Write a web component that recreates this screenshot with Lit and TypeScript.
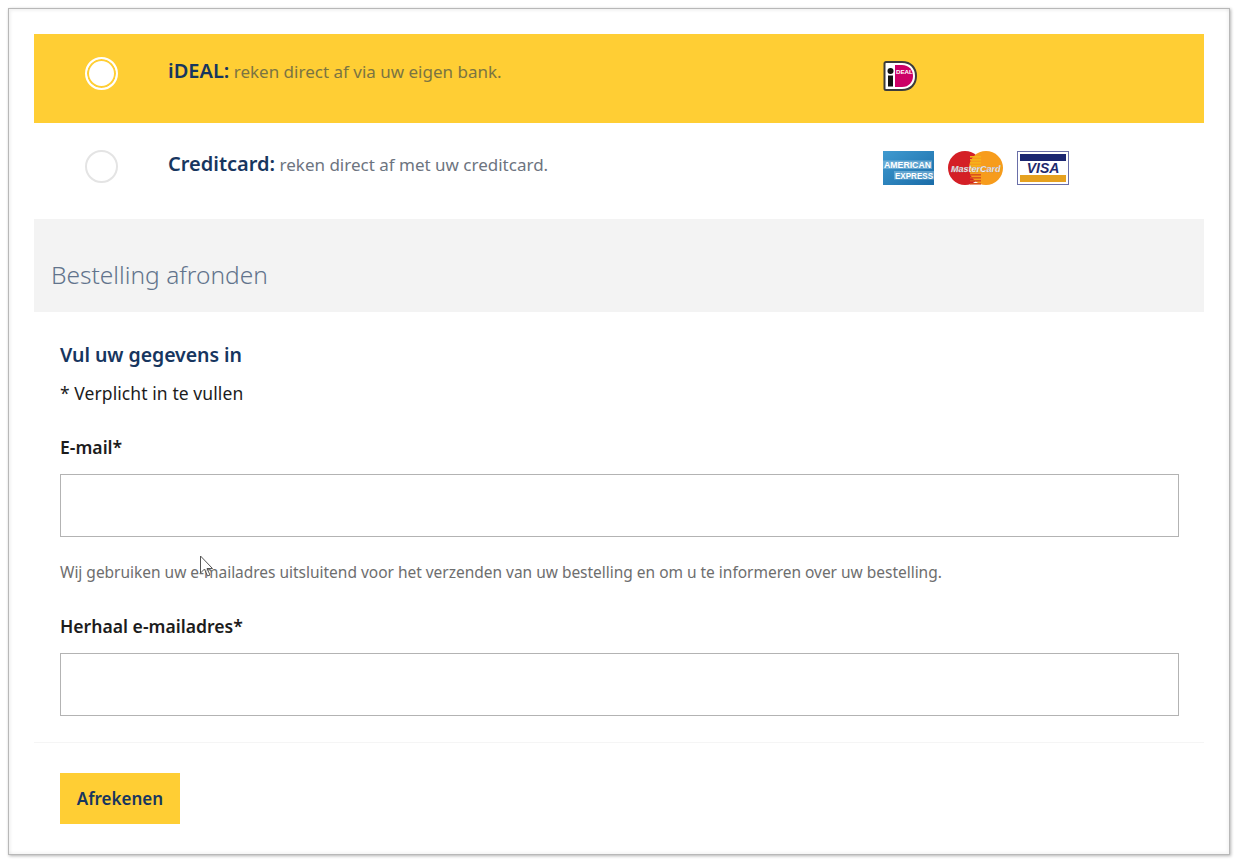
import { LitElement, html, css, svg } from "lit";
import { customElement } from "lit/decorators.js";

@customElement("app-root")
export class AppRoot extends LitElement {
  static styles = css`
    :host { display: block; width: 1238px; height: 864px; background: #fff; font-family: "Noto Sans", "Open Sans", sans-serif; overflow: hidden; }
    * { box-sizing: border-box; }
    .frame { margin: 9px 0 0 9px; width: 1220px; height: 845px; background: #fff; padding: 25px 25px 0 25px;
      box-shadow: 0 0 0 1px #b8b8b8, 1px 1px 3px 1px rgba(0,0,0,.3), inset 2px 2px 3px rgba(0,0,0,.05), inset -2px -2px 3px rgba(0,0,0,.04); }
    .pay { display: grid; grid-template-columns: 51px 33px 50px 715px auto; }
    .pay.on { height: 89px; background: #ffce34; padding-top: 23px; }
    .pay.off { height: 96px; padding-top: 27px; }
    .radio { grid-column: 2; width: 33px; height: 33px; border-radius: 50%; border: 2px solid #e4e4e4; background: #fff; }
    .on .radio { border: 2px solid #fff; background: #fff; box-shadow: inset 0 0 0 2px #ffce34; }
    .label { grid-column: 4; font-size: 17px; line-height: 28px; color: #6d7480; white-space: nowrap; }
    .on .label { color: #7b7442; line-height: 30px; margin-top: -1px; }
    .label b { font-size: 20px; font-weight: 600; color: #17365f; }
    .logos { grid-column: 5; display: flex; gap: 14px; align-items: center; height: 34px; }
    .off .logos { margin-top: 1px; height: 34px; }
    .on .logos { margin-top: 2px; }
    .head { height: 93px; background: #f3f3f3; padding: 38px 0 0 17px; font-size: 24.5px; line-height: 36px; font-weight: 300; color: #62738c; }
    .body { padding: 28px 25px 0 26px; }
    h2 { margin: 0; font-size: 19.5px; line-height: 30px; font-weight: 600; color: #17365f; letter-spacing: -.05px; }
    .req { margin: 12px 0 0; font-size: 17.5px; line-height: 22px; color: #1c1c1c; letter-spacing: .08px; }
    label { display: block; font-size: 17.6px; line-height: 24px; font-weight: 600; color: #1c1c1c; }
    .l1 { margin-top: 31px; }
    .l2 { margin-top: 31px; }
    .input { display: block; width: 100%; height: 63px; margin-top: 15px; border: 1px solid #b3b3b3; background: #fff; padding: 0; }
    .hint { margin: 24px 0 0; position: relative; font-size: 15.5px; line-height: 22px; color: #6e6e6e; letter-spacing: -.02px; white-space: nowrap; }
    .cursor { position: absolute; left: 139px; top: -6px; }
    .rule { height: 1px; background: #f5f5f5; margin-top: 26px; }
    .foot { padding: 30px 26px 0; }
    button { display: block; width: 120px; height: 51px; border: 0; background: #ffce34; color: #17365f; font: 600 17px/51px "Noto Sans", sans-serif; padding: 0; }
  `;

  private ideal() {
    return html`<svg width="34" height="30" viewBox="0 0 34 30">
      <path d="M1.500 2.500a1.500 1.500 0 0 1 1.500-1.500h16c9 0 14 6 14 14s-5 14-14 14H3a1.500 1.500 0 0 1-1.500-1.500z" fill="#fff" stroke="#3c3c3c" stroke-width="2"/>
      <path d="M12 4h7c7 0 11 5 11 11s-4 11-11 11h-7z" fill="#cc0066"/>
      <circle cx="7.500" cy="10" r="3" fill="#111"/>
      <rect x="5" y="14.500" width="5" height="11" fill="#111"/>
      <text x="13" y="13" font-family="Liberation Sans" font-weight="700" font-size="6.200" fill="#fff">DEAL</text>
    </svg>`;
  }

  private amex() {
    return html`<svg width="51" height="34" viewBox="0 0 51 34">
      <defs><linearGradient id="ax" x1="0" y1="0" x2="1" y2="1"><stop offset="0" stop-color="#3f9ad0"/><stop offset="1" stop-color="#1a6ca8"/></linearGradient></defs>
      <rect width="51" height="34" fill="url(#ax)"/>
      <rect x="0" y="9.500" width="49" height="8.500" fill="#8fc3e2" opacity=".55"/>
      <rect x="11" y="20" width="40" height="8.500" fill="#8fc3e2" opacity=".55"/>
      <text x="1" y="17" font-family="Liberation Sans" font-weight="700" font-size="8.200" fill="#fff" textLength="47" lengthAdjust="spacingAndGlyphs">AMERICAN</text>
      <text x="12" y="27.500" font-family="Liberation Sans" font-weight="700" font-size="8.200" fill="#fff" textLength="38" lengthAdjust="spacingAndGlyphs">EXPRESS</text>
    </svg>`;
  }

  private mc() {
    const bars = [11, 14, 17, 20, 23, 26];
    return html`<svg width="55" height="34" viewBox="0 0 55 34">
      <circle cx="17" cy="17" r="17" fill="#d41f26"/>
      <circle cx="38" cy="17" r="17" fill="#f79c1c"/>
      ${bars.map((y) => svg`<rect x="22" y="${y - 6}" width="11" height="1.600" fill="#f5b21a"/><rect x="22" y="${y + 6}" width="11" height="1.600" fill="#d9531e"/>`)}
      <text x="3" y="21" font-family="Liberation Sans" font-style="italic" font-weight="700" font-size="9" fill="#fff" stroke="#9a8f9a" stroke-width=".25">MasterCard</text>
    </svg>`;
  }

  private visa() {
    return html`<svg width="52" height="34" viewBox="0 0 52 34">
      <rect x=".5" y=".5" width="51" height="33" fill="#fff" stroke="#6a6fa8"/>
      <rect x="3" y="3" width="46" height="7" fill="#1c2772"/>
      <rect x="3" y="24" width="46" height="7" fill="#e6a11f"/>
      <text x="26" y="22" text-anchor="middle" font-family="Liberation Sans" font-style="italic" font-weight="700" font-size="14" fill="#1f2a6e">VISA</text>
    </svg>`;
  }

  render() {
    return html`<div class="frame">
      <div class="pay on">
        <div class="radio"></div>
        <div class="label"><b>iDEAL:</b> reken direct af via uw eigen bank.</div>
        <div class="logos">${this.ideal()}</div>
      </div>
      <div class="pay off">
        <div class="radio"></div>
        <div class="label"><b>Creditcard:</b> reken direct af met uw creditcard.</div>
        <div class="logos">${this.amex()}${this.mc()}${this.visa()}</div>
      </div>
      <div class="head">Bestelling afronden</div>
      <div class="body">
        <h2>Vul uw gegevens in</h2>
        <p class="req">* Verplicht in te vullen</p>
        <label class="l1">E-mail*</label>
        <div class="input"></div>
        <p class="hint">Wij gebruiken uw e-mailadres uitsluitend voor het verzenden van uw bestelling en om u te informeren over uw bestelling.
          <svg class="cursor" width="16" height="24" viewBox="0 0 16 24"><path d="M1.500 1v17l4-4 3 7 2.500-1-3-6.500h5.500z" fill="#fff" fill-opacity=".75" stroke="#555" stroke-width="1"/></svg>
        </p>
        <label class="l2">Herhaal e-mailadres*</label>
        <div class="input"></div>
      </div>
      <div class="rule"></div>
      <div class="foot"><button>Afrekenen</button></div>
    </div>`;
  }
}
